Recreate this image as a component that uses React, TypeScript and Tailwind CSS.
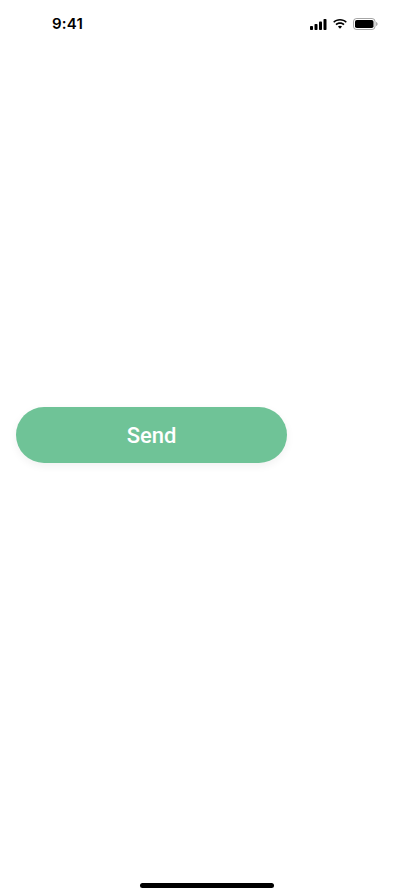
import React from 'react';

const StatusBar: React.FC = () => (
  <div className="flex h-[46px] items-center justify-between pl-[52px] pr-[36px] pt-[2px]">
    <span className="text-[15px] font-semibold tracking-[0.2px] text-black" style={{ fontFamily: 'Inter, "Liberation Sans", sans-serif' }}>
      9:41
    </span>
    <div className="flex items-center gap-[5px]">
      <svg width="17" height="11" viewBox="0 0 17 11" fill="#000">
        <rect x="0" y="7" width="3" height="4" rx="0.8" />
        <rect x="4.5" y="5" width="3" height="6" rx="0.8" />
        <rect x="9" y="2.5" width="3" height="8.5" rx="0.8" />
        <rect x="13.5" y="0" width="3" height="11" rx="0.8" />
      </svg>
      <svg width="16" height="12" viewBox="0 0 16 12" fill="#000">
        <path d="M8 2.6c2.2 0 4.2.85 5.7 2.25l1.15-1.2C13.05 1.95 10.65 1 8 1S2.95 1.95 1.15 3.65L2.3 4.85C3.8 3.45 5.8 2.6 8 2.6z" />
        <path d="M8 5.9c1.3 0 2.5.5 3.4 1.3l1.15-1.2C11.35 4.95 9.75 4.3 8 4.3s-3.35.65-4.55 1.7L4.6 7.2C5.5 6.4 6.7 5.9 8 5.9z" />
        <path d="M8 7.7c-.8 0-1.5.3-2.05.8L8 10.7l2.05-2.2C9.5 8 8.8 7.7 8 7.7z" />
      </svg>
      <svg width="25" height="12" viewBox="0 0 25 12">
        <rect x="0.5" y="0.5" width="21.5" height="11" rx="3" fill="none" stroke="#000" strokeOpacity="0.35" />
        <rect x="2" y="2" width="18.5" height="8" rx="1.8" fill="#000" />
        <path d="M23.2 4v4c.8-.3 1.3-1.1 1.3-2s-.5-1.7-1.3-2z" fill="#000" fillOpacity="0.4" />
      </svg>
    </div>
  </div>
);

const App: React.FC = () => {
  return (
    <div className="flex h-[896px] w-[414px] flex-col bg-white">
      <StatusBar />
      <div className="flex flex-1 flex-col px-4 pt-[361px]">
        <button
          className="flex h-[56px] w-[271px] items-center justify-center rounded-full bg-[#6fc397] shadow-[0_3px_8px_rgba(0,0,0,0.06)]"
          style={{ fontFamily: 'Roboto, "Liberation Sans", sans-serif' }}
        >
          <span className="text-[22px] font-medium text-white">Send</span>
        </button>
      </div>
      <div className="flex h-[34px] justify-center pt-[21px]">
        <div className="h-[5px] w-[134px] rounded-full bg-black" />
      </div>
    </div>
  );
};

export default App;
